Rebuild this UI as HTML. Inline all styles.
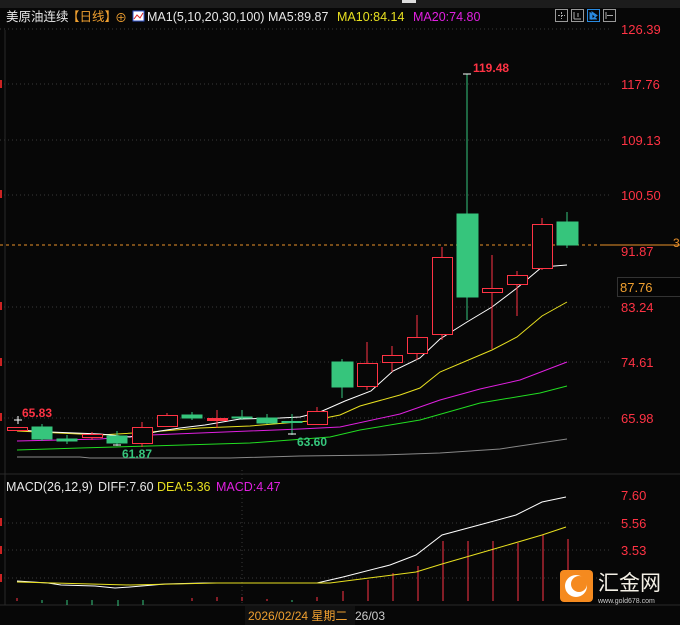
<!DOCTYPE html><html><head><meta charset="utf-8"><style>
body{margin:0;background:#070707;width:680px;height:625px;overflow:hidden;font-family:"Liberation Sans","Noto Sans CJK SC",sans-serif}
svg{display:block}
</style></head><body>
<svg width="680" height="625" xmlns="http://www.w3.org/2000/svg" font-family="Liberation Sans, Noto Sans CJK SC, sans-serif">
<rect width="680" height="625" fill="#070707"/>
<rect width="680" height="8" fill="#1c1c1c"/>
<rect x="402" y="0" width="14" height="3" fill="#ddd"/>
<!-- grid -->
<g stroke="#3a3a3a" stroke-dasharray="1,3">
<line x1="0" y1="29" x2="612" y2="29"/><line x1="0" y1="84" x2="612" y2="84"/><line x1="0" y1="140" x2="612" y2="140"/><line x1="0" y1="195" x2="612" y2="195"/><line x1="0" y1="307" x2="612" y2="307"/><line x1="0" y1="362" x2="612" y2="362"/><line x1="0" y1="418" x2="612" y2="418"/>
<line x1="0" y1="523" x2="612" y2="523"/><line x1="0" y1="550" x2="612" y2="550"/><line x1="0" y1="578" x2="612" y2="578"/>
<line x1="242" y1="470" x2="242" y2="605"/>
</g>
<line x1="0" y1="474" x2="680" y2="474" stroke="#2a2a2a"/>
<line x1="0" y1="605" x2="680" y2="605" stroke="#2a2a2a"/>
<line x1="5" y1="30" x2="5" y2="605" stroke="#2a2a2a"/>
<!-- left red ticks -->
<g fill="#c22"><rect x="0" y="80" width="2" height="8"/><rect x="0" y="190" width="2" height="8"/><rect x="0" y="302" width="2" height="8"/><rect x="0" y="358" width="2" height="8"/><rect x="0" y="413" width="2" height="8"/><rect x="0" y="518" width="2" height="8"/><rect x="0" y="546" width="2" height="8"/><rect x="0" y="574" width="2" height="8"/></g>
<!-- current price line -->
<line x1="0" y1="245" x2="600" y2="245" stroke="#e8902a" stroke-dasharray="3,3"/>
<line x1="600" y1="245" x2="680" y2="245" stroke="#e8902a"/>
<!-- MA lines -->
<polyline fill="none" stroke="#888" stroke-width="1" points="17,457 80,457 90,458 230,458 300,456 380,455 440,453 500,449 567,439"/>
<polyline fill="none" stroke="#22dd22" stroke-width="1" points="17,450 80,448 150,446 250,443 330,437 360,430 420,420 480,403 540,393 567,386"/>
<polyline fill="none" stroke="#e020e0" stroke-width="1" points="17,441 60,440 100,439 150,435 200,433 300,429 340,427 400,414 440,400 480,389 520,380 567,362"/>
<polyline fill="none" stroke="#e8e020" stroke-width="1" points="17,431 100,435 150,432 200,428 250,426 310,421 340,415 360,406 400,395 420,388 440,372 492,350 517,337 542,316 567,302"/>
<polyline fill="none" stroke="#fff" stroke-width="1" points="17,430 50,432 100,434 130,437 160,431 180,428 205,425 240,419 280,418 300,417 320,412 345,401 371,391 393,371 420,358 440,339 467,322 492,307 517,288 542,267 567,265"/>
<!-- candles -->
<g stroke-width="1">
<g stroke="#ff3344" fill="#070707">
<rect x="7.5" y="427.5" width="20" height="3"/>
<line x1="92" y1="432" x2="92" y2="440"/><rect x="82.5" y="434.5" width="20" height="3"/>
<line x1="142" y1="422" x2="142" y2="427"/><line x1="142" y1="443" x2="142" y2="447"/><rect x="132.5" y="427.5" width="20" height="16"/>
<line x1="167" y1="413" x2="167" y2="415"/><rect x="157.5" y="415.5" width="20" height="11"/>
<line x1="217" y1="410" x2="217" y2="428"/><rect x="207.5" y="418.5" width="20" height="2" fill="#ff3344"/>
<line x1="317" y1="407" x2="317" y2="411"/><rect x="307.5" y="411.5" width="20" height="13"/>
<line x1="367" y1="342" x2="367" y2="363"/><line x1="367" y1="386" x2="367" y2="390"/><rect x="357.5" y="363.5" width="20" height="23"/>
<line x1="392" y1="346" x2="392" y2="372"/><rect x="382.5" y="355.5" width="20" height="7"/>
<line x1="417" y1="315" x2="417" y2="360"/><rect x="407.5" y="337.5" width="20" height="16"/>
<line x1="442" y1="247" x2="442" y2="340"/><rect x="432.5" y="257.5" width="20" height="77"/>
<line x1="492" y1="255" x2="492" y2="349"/><rect x="482.5" y="288.5" width="20" height="4"/>
<line x1="517" y1="271" x2="517" y2="316"/><rect x="507.5" y="275.5" width="20" height="9"/>
<line x1="542" y1="218" x2="542" y2="270"/><rect x="532.5" y="224.5" width="20" height="44"/>
</g>
<g stroke="#36c57c" fill="#36c57c">
<line x1="42" y1="424" x2="42" y2="441"/><rect x="32" y="427" width="20" height="12"/>
<line x1="67" y1="435" x2="67" y2="444"/><rect x="57" y="439" width="20" height="2"/>
<line x1="117" y1="431" x2="117" y2="446"/><rect x="107" y="436" width="20" height="7"/>
<line x1="192" y1="412" x2="192" y2="420"/><rect x="182" y="415" width="20" height="3"/>
<line x1="242" y1="410" x2="242" y2="420"/><rect x="232" y="417" width="20" height="1"/>
<line x1="267" y1="414" x2="267" y2="424"/><rect x="257" y="418" width="20" height="5"/>
<line x1="292" y1="414" x2="292" y2="435"/><rect x="282" y="421.5" width="20" height="1"/>
<line x1="342" y1="359" x2="342" y2="398"/><rect x="332" y="362" width="21" height="25"/>
<line x1="467" y1="74" x2="467" y2="320"/><rect x="457" y="214" width="21" height="83"/>
<line x1="567" y1="212" x2="567" y2="248"/><rect x="557" y="222" width="21" height="23"/>
</g>
<g stroke="#fff"><line x1="14" y1="420" x2="22" y2="420"/><line x1="18" y1="416" x2="18" y2="424"/>
<line x1="113" y1="445" x2="121" y2="445"/><line x1="288" y1="434" x2="296" y2="434"/><line x1="463" y1="74" x2="471" y2="74"/></g>
</g>
<g font-size="12" font-weight="bold">
<text x="22" y="417" fill="#ff3344">65.83</text>
<text x="122" y="458" fill="#36c57c">61.87</text>
<text x="297" y="446" fill="#36c57c">63.60</text>
<text x="473" y="72" fill="#ff3344">119.48</text>
</g>
<!-- right axis -->
<g font-size="13" fill="#ff3344">
<text x="621" y="34">126.39</text><text x="621" y="89">117.76</text><text x="621" y="145">109.13</text><text x="621" y="200">100.50</text><text x="621" y="256">91.87</text><text x="621" y="312">83.24</text><text x="621" y="367">74.61</text><text x="621" y="423">65.98</text>
<text x="621" y="500">7.60</text><text x="621" y="528">5.56</text><text x="621" y="555">3.53</text>
</g>
<rect x="617.5" y="277.5" width="63" height="19" fill="#050505" stroke="#333"/>
<text x="620" y="292" font-size="13" fill="#f0a030">87.76</text>
<text x="673" y="247" font-size="12" fill="#e8902a">3</text>
<!-- buttons -->
<g fill="none" stroke="#999"><rect x="555.5" y="9.5" width="12" height="12"/><rect x="571.5" y="9.5" width="12" height="12"/><rect x="603.5" y="9.5" width="12" height="12"/></g>
<rect x="587.5" y="9.5" width="12" height="12" fill="none" stroke="#2a8ae0"/>
<g stroke="#aaa"><line x1="558" y1="15.5" x2="565" y2="15.5" stroke-dasharray="2,1"/><line x1="561.5" y1="12" x2="561.5" y2="19" stroke-dasharray="2,1"/><line x1="574" y1="12" x2="574" y2="19"/><line x1="574" y1="19" x2="581" y2="19"/><line x1="578" y1="13" x2="578" y2="17"/><line x1="606" y1="12" x2="606" y2="19"/><line x1="607" y1="15.5" x2="613" y2="15.5"/></g>
<path d="M590 12v7h7M592 12l5 3.5-5 3.5z" fill="#2a8ae0" stroke="#2a8ae0"/>
<!-- header -->
<g font-size="12.5">
<text x="6" y="21" fill="#e8e8e8">美原油连续</text>
<text x="67" y="21" fill="#f0a030">【日线】</text>
<text x="115" y="22" fill="#f0a030" font-size="12">⊕</text>
<rect x="133" y="11" width="11" height="10" fill="#fff" stroke="#3355cc"/>
<polyline points="134,19 137,15 140,18 143,13" fill="none" stroke="#d22"/>
<text x="147" y="21" fill="#e8e8e8">MA1(5,10,20,30,100)</text>
<text x="268" y="21" fill="#e8e8e8">MA5:89.87</text>
<text x="337" y="21" fill="#e8e020">MA10:84.14</text>
<text x="413" y="21" fill="#e020e0">MA20:74.80</text>
</g>
<!-- MACD -->
<g font-size="12.5"><text x="6" y="491" fill="#e8e8e8">MACD(26,12,9)</text><text x="98" y="491" fill="#e8e8e8">DIFF:7.60</text><text x="157" y="491" fill="#e8e020">DEA:5.36</text><text x="216" y="491" fill="#e020e0">MACD:4.47</text></g>
<g stroke="#ff3344"><line x1="343" y1="591" x2="343" y2="601"/><line x1="368" y1="580" x2="368" y2="601"/><line x1="393" y1="573" x2="393" y2="601"/><line x1="418" y1="566" x2="418" y2="601"/><line x1="443" y1="541" x2="443" y2="601"/><line x1="468" y1="541" x2="468" y2="601"/><line x1="493" y1="541" x2="493" y2="601"/><line x1="518" y1="543" x2="518" y2="601"/><line x1="543" y1="535" x2="543" y2="601"/><line x1="568" y1="539" x2="568" y2="601"/>
<line x1="17" y1="598" x2="17" y2="601"/><line x1="192" y1="598" x2="192" y2="601"/><line x1="217" y1="597" x2="217" y2="601"/><line x1="242" y1="597" x2="242" y2="601"/><line x1="267" y1="599" x2="267" y2="601"/><line x1="317" y1="597" x2="317" y2="601"/></g>
<g stroke="#36c57c"><line x1="42" y1="600" x2="42" y2="603"/><line x1="67" y1="600" x2="67" y2="605"/><line x1="92" y1="600" x2="92" y2="605"/><line x1="118" y1="600" x2="118" y2="606"/><line x1="143" y1="600" x2="143" y2="605"/><line x1="292" y1="600" x2="292" y2="602"/></g>
<polyline fill="none" stroke="#fff" points="17,581 48,583 61,585 95,586 115,588 130,587 165,584 204,583 317,583 343,577 390,565 416,555 442,535 468,528 494,521 516,515 542,502 566,497"/>
<polyline fill="none" stroke="#e8e020" points="17,582 130,585 217,583 330,583 369,578 416,572 442,564 494,549 542,535 566,527"/>
<!-- logo -->
<rect x="560" y="570" width="33" height="32" rx="4" fill="#f58a1f"/>
<circle cx="576" cy="586" r="11" fill="#fff"/><circle cx="579" cy="584" r="8" fill="#f58a1f"/>
<text x="598" y="590" font-size="21" fill="#f4f0e6">汇金网</text>
<text x="598" y="603" font-size="7" fill="#ccc">www.gold678.com</text>
<!-- date bar -->
<rect x="245" y="606" width="110" height="19" fill="#111"/>
<text x="248" y="620" font-size="12" fill="#f0a030">2026/02/24 星期二</text>
<text x="355" y="620" font-size="12" fill="#ccc">26/03</text>
</svg>
</body></html>
